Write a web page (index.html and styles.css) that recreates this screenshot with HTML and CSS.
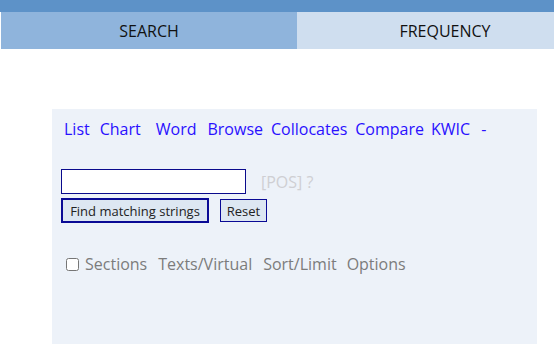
FILE: index.html
```html
<!DOCTYPE html>
<html>
<head>
<meta charset="utf-8">
<link rel="stylesheet" href="styles.css">
</head>
<body>
<div class="topbar"></div>
<div class="tabs">
  <div class="tab tab-active">SEARCH</div>
  <div class="tab tab-idle">FREQUENCY</div>
</div>
<div class="panel">
  <div class="links">
    <a class="lnk l-list">List</a>
    <a class="lnk l-chart">Chart</a>
    <a class="lnk l-word">Word</a>
    <a class="lnk l-browse">Browse</a>
    <a class="lnk l-coll">Collocates</a>
    <a class="lnk l-comp">Compare</a>
    <a class="lnk l-kwic">KWIC</a>
    <a class="lnk">-</a>
  </div>
  <div class="form">
    <div class="row">
      <input class="word" type="text">
      <span class="pos">[POS] ?</span>
    </div>
    <div class="row btns">
      <button class="btn btn-find">Find matching strings</button>
      <button class="btn btn-reset">Reset</button>
    </div>
  </div>
  <div class="opts">
    <input class="cb" type="checkbox">
    <span class="opt">Sections</span>
    <span class="opt">Texts/Virtual</span>
    <span class="opt opt-sort">Sort/Limit</span>
    <span class="opt">Options</span>
  </div>
</div>
</body>
</html>
```

FILE: styles.css
```css
html, body {
  margin: 0;
  padding: 0;
  overflow: hidden;
  background: #ffffff;
  font-family: "Open Sans", "Noto Sans", sans-serif;
}
.topbar {
  height: 12px;
  background: #5d92c8;
}
.tabs {
  display: flex;
  height: 37px;
  padding-left: 1px;
  overflow: hidden;
  width: 553px;
}
.tab {
  flex: 0 0 296px;
  display: flex;
  align-items: center;
  justify-content: center;
  font-size: 16px;
  color: #111;
}
.tab-active {
  background: #8fb4dc;
}
.tab-idle {
  background: #cfdeef;
}
.panel {
  margin: 60px 0 0 52px;
  width: 485px;
  height: 240px;
  background: #edf2f9;
  box-sizing: border-box;
  padding: 9px 0 0 12px;
}
.links {
  display: flex;
  font-size: 16px;
  line-height: 22px;
  height: 22px;
}
.lnk {
  color: #2a10ff;
  text-decoration: none;
  margin-right: 7px;
}
.l-list { margin-right: 10px; }
.l-chart { margin-right: 15px; }
.l-word { margin-right: 11px; }
.l-browse { margin-right: 8px; }
.l-coll { margin-right: 8px; }
.l-kwic { margin-right: 11px; }
.form {
  margin: 29px 0 0 -3px;
}
.row {
  display: flex;
  align-items: center;
}
.word {
  width: 185px;
  height: 25px;
  box-sizing: border-box;
  border: 1px solid #0a0a8c;
  background: #fff;
  margin: 0;
  padding: 0 3px;
}
.pos {
  margin-left: 15px;
  font-size: 16px;
  color: #cfcfd3;
}
.btns {
  margin-top: 4px;
}
.btn {
  font-family: "Open Sans", "Noto Sans", sans-serif;
  font-size: 13px;
  color: #222;
  background: #dde7f2;
  margin: 0;
  padding: 0;
  box-sizing: border-box;
}
.btn-find {
  width: 148px;
  height: 25px;
  border: 2px solid #0a0a95;
}
.btn-reset {
  width: 47px;
  height: 23px;
  border: 1px solid #0a0a95;
  margin-left: 11px;
}
.opts {
  margin-top: 30px;
  display: flex;
  align-items: center;
  font-size: 16px;
  line-height: 22px;
  color: #7c7c7c;
}
.cb {
  margin: 0 6px 0 2px;
  width: 13px;
  height: 13px;
}
.opt {
  margin-right: 11px;
}
.opt-sort {
  margin-right: 10px;
}
```
